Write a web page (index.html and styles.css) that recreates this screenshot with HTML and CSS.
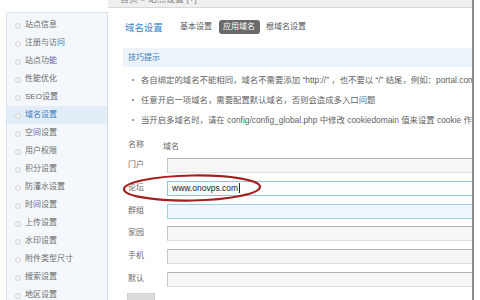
FILE: index.html
```html
<!DOCTYPE html>
<html lang="zh-CN">
<head>
<meta charset="utf-8">
<title>域名设置</title>
<link rel="stylesheet" href="styles.css">
</head>
<body>
<div class="screen">
  <aside class="side">
    <ul class="menu">
      <li>站点信息</li>
      <li>注册与访问</li>
      <li>站点功能</li>
      <li>性能优化</li>
      <li>SEO设置</li>
      <li class="on">域名设置</li>
      <li>空间设置</li>
      <li>用户权限</li>
      <li>积分设置</li>
      <li>防灌水设置</li>
      <li>时间设置</li>
      <li>上传设置</li>
      <li>水印设置</li>
      <li>附件类型尺寸</li>
      <li>搜索设置</li>
      <li>地区设置</li>
    </ul>
  </aside>
  <main class="main">
    <div class="crumb"><span>首页 » 站点设置 [+]</span></div>
    <div class="head">
      <h1>域名设置</h1>
      <nav class="tabs">
        <span class="tab">基本设置</span>
        <span class="tab on">应用域名</span>
        <span class="tab">根域名设置</span>
      </nav>
    </div>
    <div class="tips">
      <div class="tips-title">技巧提示</div>
      <ul class="tips-list">
        <li>各自绑定的域名不能相同，域名不需要添加 “http://” ，也不要以 “/” 结尾，例如：portal.comsenz.com</li>
        <li>任意开启一项域名，需要配置默认域名，否则会造成多入口问题</li>
        <li>当开启多域名时，请在 config/config_global.php 中修改 cookiedomain 值来设置 cookie 作用域</li>
      </ul>
    </div>
    <div class="form">
      <div class="row hdr"><span class="lbl">名称</span><span class="col">域名</span></div>
      <div class="row"><span class="lbl">门户</span><span class="inp"></span></div>
      <div class="row"><span class="lbl">论坛</span><span class="inp focus">www.onovps.com<i class="caret"></i></span></div>
      <div class="row"><span class="lbl">群组</span><span class="inp hover"></span></div>
      <div class="row"><span class="lbl">家园</span><span class="inp"></span></div>
      <div class="row"><span class="lbl">手机</span><span class="inp"></span></div>
      <div class="row"><span class="lbl">默认</span><span class="inp"></span></div>
      <div class="btn"></div>
    </div>
  </main>
  <div class="frame"></div>
</div>
<svg class="mark" width="150" height="34" viewBox="0 0 150 34">
  <ellipse cx="72" cy="17" rx="68" ry="12.5" fill="none" stroke="#a3201f" stroke-width="2.2" transform="rotate(-1 72 17)"/>
</svg>
</body>
</html>
```

FILE: styles.css
```css
* { box-sizing: border-box; margin: 0; padding: 0; }
html, body { width: 480px; height: 300px; overflow: hidden; background: #fff; }
body {
  position: relative;
  font-family: "Liberation Sans", "Noto Sans CJK SC", sans-serif;
  font-size: 8px;
  color: #666;
}
.screen { display: flex; width: 480px; height: 300px; }

.side { width: 108px; flex: none; padding: 12px 0 0 6px; }
.menu {
  list-style: none;
  height: 100%;
  background: #f4f8fc;
  border-left: 1px solid #dbe5ef;
  border-top: 1px solid #dbe5ef;
  border-right: 1px solid #d3dfeb;
  padding-top: 3px;
}
.menu li {
  height: 18px;
  line-height: 18px;
  padding-left: 18px;
  position: relative;
  color: #6a6a6a;
  white-space: nowrap;
}
.menu li::before {
  content: "";
  position: absolute;
  left: 8px;
  top: 7px;
  width: 4px;
  height: 4px;
  border-radius: 50%;
  border: 1px solid #d4d4d4;
  background: #f4f4f4;
}
.menu li.on { background: #e2edf8; color: #3b7cc3; }

.main { width: 364px; flex: none; overflow: hidden; }
.crumb {
  height: 8px;
  background: #efefef;
  border-bottom: 1px solid #d9d9d9;
  overflow: hidden;
  padding-left: 12px;
  font-size: 9px;
  color: #888;
}
.crumb span { display: block; margin-top: -7px; line-height: 12px; white-space: nowrap; }

.head { height: 37px; display: flex; align-items: center; padding-left: 17px; }
.head h1 { font-size: 9.4px; font-weight: normal; color: #2f87c9; margin-right: 13px; }
.tabs { display: flex; gap: 2px; align-items: center; }
.tab { padding: 0 4.5px; height: 14px; line-height: 14px; color: #555; white-space: nowrap; }
.tab.on { background: #6a6a6a; color: #fff; border-radius: 3px; }

.tips { margin: 3px 0 0 15px; }
.tips-title {
  height: 19px;
  line-height: 19px;
  background: #edf3fa;
  padding-left: 5px;
  color: #2c7ab8;
}
.tips-list { list-style: none; padding-top: 3px; font-size: 8.4px; }
.tips-list li {
  height: 20px;
  line-height: 20px;
  padding-left: 18px;
  white-space: nowrap;
  position: relative;
  color: #5f5f5f;
}
.tips-list li::before {
  content: "";
  position: absolute;
  left: 9px;
  top: 9px;
  width: 2px;
  height: 2px;
  background: #999;
}

.form { margin: 5px 0 0 15px; }
.row { height: 22.8px; display: flex; align-items: flex-start; }
.row.hdr { height: 20px; align-items: center; }
.lbl { width: 44px; flex: none; padding-left: 5px; color: #666; line-height: 20px; }
.row.hdr .lbl { width: 40px; }
.col { color: #666; }
.inp {
  margin-top: 3px;
  height: 15px;
  flex: 1;
  min-width: 320px;
  background: #f6f6f6;
  border: 1px solid #e0e0e0;
  border-top-color: #b3b3b3;
  border-left-color: #c8c8c8;
  font-size: 8.5px;
  line-height: 13px;
  padding-left: 4px;
  color: #222;
  white-space: nowrap;
}
.inp.focus { background: #fbfdff; border-color: #8ec7dc; }
.inp.hover { background: #f0f7fc; border-color: #9dcfe0; }
.caret { display: inline-block; width: 1px; height: 10px; background: #222; vertical-align: -2px; margin-left: 1px; }
.btn { margin: 1px 0 0 4px; width: 28px; height: 14px; background: #dcdcdc; border: 1px solid #cfcfcf; }

.frame { width: 8px; flex: none; border-left: 2px solid #8d8d8d; background: #fff; }

.mark { position: absolute; left: 120px; top: 171px; }
```
